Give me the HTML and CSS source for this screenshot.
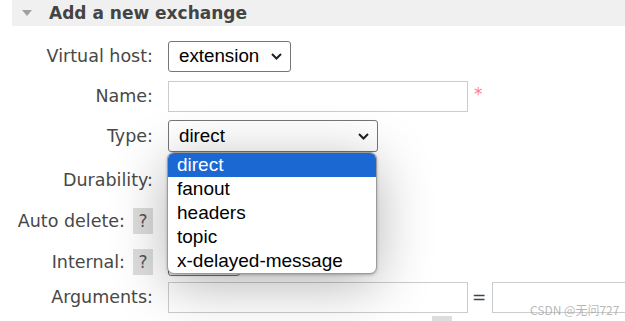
FILE: index.html
```html
<!DOCTYPE html>
<html lang="en">
<head>
  <meta charset="UTF-8">
  <meta name="viewport" content="width=device-width, initial-scale=1.0">
  <title>Add a new exchange</title>
  <link rel="stylesheet" href="styles.css">
</head>
<body>
  <div class="section">
    <h2 class="section-head"><span class="toggle"></span>Add a new exchange</h2>

    <!-- exchange form -->
    <form class="form">
      <label class="lbl">Virtual host:</label>
      <div class="ctl">
        <div class="sel sel-vhost">
          <span>extension</span>
          <svg class="chev" width="11" height="7" viewBox="0 0 11 7"><path d="M1 1l4.5 4.5L10 1"/></svg>
        </div>
      </div>

      <label class="lbl">Name:</label>
      <div class="ctl">
        <input type="text" class="txt">
        <span class="req">*</span>
      </div>

      <label class="lbl">Type:</label>
      <div class="ctl">
        <div class="sel-wrap">
          <div class="sel sel-type">
            <span>direct</span>
            <svg class="chev" width="11" height="7" viewBox="0 0 11 7"><path d="M1 1l4.5 4.5L10 1"/></svg>
          </div>
          <ul class="dropdown">
            <li class="active">direct</li>
            <li>fanout</li>
            <li>headers</li>
            <li>topic</li>
            <li>x-delayed-message</li>
          </ul>
        </div>
      </div>

      <label class="lbl">Durability:</label>
      <div class="ctl">
        <div class="sel sel-small sel-durable"></div>
      </div>

      <label class="lbl">Auto delete: <span class="help">?</span></label>
      <div class="ctl">
        <div class="sel sel-small"></div>
      </div>

      <label class="lbl lbl-internal">Internal: <span class="help">?</span></label>
      <div class="ctl">
        <div class="sel sel-small sel-internal"></div>
      </div>

      <label class="lbl">Arguments:</label>
      <div class="ctl">
        <input type="text" class="txt">
        <span class="eq">=</span>
        <input type="text" class="txt txt-value">
      </div>

      <span class="lbl"></span>
      <div class="ctl ctl-more">
        <span class="help help-more"></span>
      </div>
    </form>
  </div>

  <div class="watermark">CSDN @无问727</div>
</body>
</html>
```

FILE: styles.css
```css
body {
  margin: 0;
  background-color: #fff;
  font-family: "DejaVu Sans", Verdana, sans-serif;
  color: #444;
  overflow: hidden;
}

.section {
  margin-left: 12px;
}

.section-head {
  display: flex;
  align-items: center;
  height: 26px;
  margin: 0;
  padding-left: 10px;
  background-color: #f0f0f0;
  font-size: 17px;
  font-weight: bold;
  line-height: 20px;
  color: #444;
}

.toggle {
  width: 0;
  height: 0;
  margin-right: 17px;
  border-left: 5px solid transparent;
  border-right: 5px solid transparent;
  border-top: 6px solid #a0a0a0;
}

.form {
  display: grid;
  grid-template-columns: 141px 1fr;
  grid-template-rows: 40px 40px 40px 48px 34px 43px 32px auto;
  column-gap: 15px;
  align-items: center;
  margin-top: 10px;
}

.lbl {
  display: flex;
  justify-content: flex-end;
  align-items: center;
  gap: 8px;
  font-size: 17.5px;
  color: #484848;
  white-space: nowrap;
}

.lbl-internal {
  padding-top: 5px;
}

.ctl {
  display: flex;
  align-items: center;
}

.help {
  display: inline-flex;
  justify-content: center;
  align-items: center;
  width: 20px;
  height: 26px;
  background-color: #ddd;
  font-size: 17px;
  color: #555;
}

.sel {
  display: flex;
  justify-content: space-between;
  align-items: center;
  box-sizing: border-box;
  height: 31px;
  padding: 0 8px 0 10px;
  border: 1px solid #767676;
  border-radius: 3px;
  background-color: #fff;
  font-family: "Liberation Sans", Arial, sans-serif;
  font-size: 18.75px;
  color: #000;
}

.sel-vhost {
  width: 123px;
}

.sel-type {
  width: 210px;
  height: 32px;
}

.sel-small {
  width: 72px;
}

.sel-durable {
  width: 110px;
}

.sel-internal {
  margin-top: 2px;
}

.chev path {
  fill: none;
  stroke: #222;
  stroke-width: 2;
}

.sel-wrap {
  position: relative;
}

.dropdown {
  position: absolute;
  top: 100%;
  left: -1px;
  z-index: 5;
  box-sizing: border-box;
  width: 210px;
  margin: 0;
  padding: 0;
  list-style: none;
  background-color: #fff;
  border: 1px solid #9a9a9a;
  border-radius: 7px;
  overflow: hidden;
  box-shadow: 0 10px 55px rgba(0, 0, 0, 0.3), 0 1px 3px rgba(0, 0, 0, 0.25);
  font-family: "Liberation Sans", Arial, sans-serif;
  font-size: 19px;
  color: #000;
}

.dropdown li {
  height: 24px;
  line-height: 23px;
  padding-left: 9px;
}

.dropdown li.active {
  background-color: #1b68d3;
  color: #fff;
}

.txt {
  box-sizing: border-box;
  width: 300px;
  height: 31px;
  margin: 0;
  border: 1px solid #ccc;
  background-color: #fff;
}

.req {
  align-self: flex-start;
  margin-top: 3px;
  margin-left: 6px;
  font-size: 17px;
  color: #ff8080;
}

.eq {
  margin: 0 6px 0 4px;
  font-size: 17px;
  color: #444;
}

.txt-value {
  width: 200px;
  flex-shrink: 0;
}

.ctl-more {
  align-self: start;
  padding-top: 3px;
}

.help-more {
  margin-left: 264px;
}

.watermark {
  position: absolute;
  left: 530px;
  top: 301px;
  font-family: "Noto Sans CJK SC", sans-serif;
  font-size: 12px;
  color: rgba(160, 160, 160, 0.75);
}
```
